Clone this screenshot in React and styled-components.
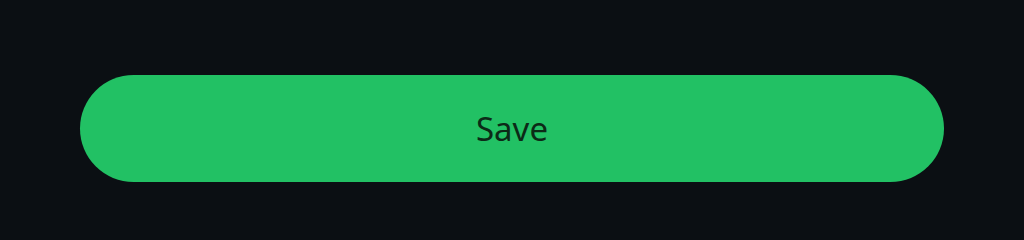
import React from "react";
import styled, { createGlobalStyle } from "styled-components";

const GlobalStyle = createGlobalStyle`
  html, body {
    margin: 0;
    padding: 0;
    background: #0b0f13;
  }
  body {
    font-family: "Noto Sans", "DejaVu Sans", sans-serif;
  }
`;

const Page = styled.div`
  height: 234px;
  box-sizing: border-box;
  padding: 75px 80px 0;
  background: #0b0f13;
`;

const SaveButton = styled.button`
  display: flex;
  align-items: center;
  justify-content: center;
  width: 100%;
  height: 107px;
  border: none;
  border-radius: 54px;
  background: #22c164;
  color: #0c2a17;
  font-family: "Noto Sans", "DejaVu Sans", sans-serif;
  font-size: 33px;
  font-weight: 400;
  cursor: pointer;
`;

export default function App() {
  return (
    <>
      <GlobalStyle />
      <Page>
        <SaveButton type="button">Save</SaveButton>
      </Page>
    </>
  );
}
